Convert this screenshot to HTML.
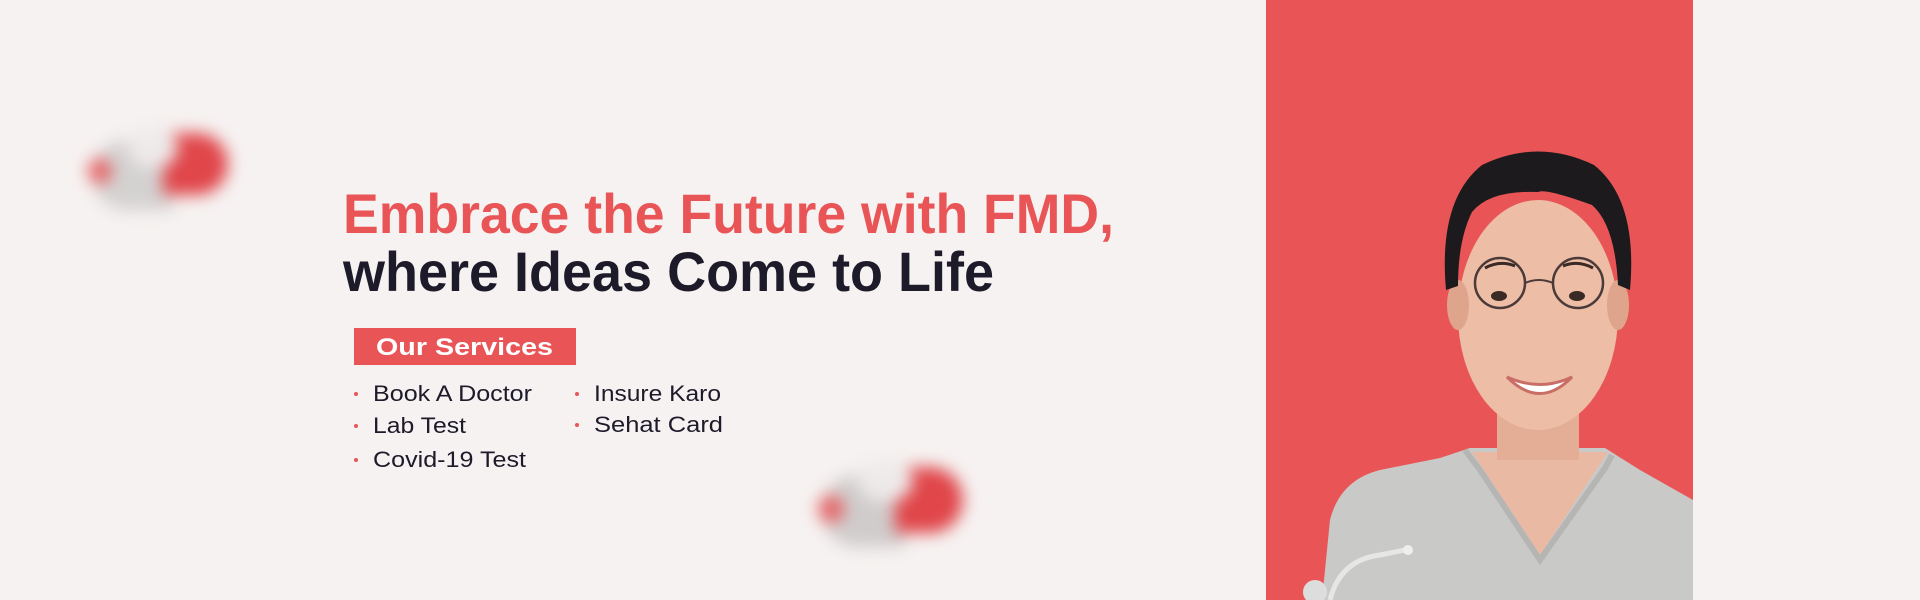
<!DOCTYPE html>
<html><head><meta charset="utf-8"><style>
html,body{margin:0;padding:0}
body{width:1920px;height:600px;overflow:hidden;background:#f6f2f1;position:relative;font-family:"Liberation Sans",sans-serif}
.panel{position:absolute;left:1266px;top:0;width:427px;height:600px;background:#e95556}
.pill{position:absolute;filter:blur(8px)}
</style></head><body>
<div class="panel"></div>

<div class="pill" style="left:88px;top:118px;width:140px;height:110px;">
 <div style="position:absolute;left:5px;top:22px;width:80px;height:70px;border-radius:34px 0 0 34px;background:#d4d1d1;"></div>
 <div style="position:absolute;left:75px;top:15px;width:65px;height:62px;border-radius:0 32px 32px 0;background:#e0464a;"></div>
 <div style="position:absolute;left:40px;top:10px;width:50px;height:40px;border-radius:50%;background:#eeeaea;"></div>
 <div style="position:absolute;left:0;top:40px;width:24px;height:26px;border-radius:50%;background:#e46466;"></div>
</div>
<div class="pill" style="left:818px;top:445px;width:145px;height:120px;">
 <div style="position:absolute;left:5px;top:30px;width:82px;height:72px;border-radius:34px 0 0 34px;background:#d0cccc;"></div>
 <div style="position:absolute;left:77px;top:22px;width:68px;height:66px;border-radius:0 34px 34px 0;background:#e0464a;"></div>
 <div style="position:absolute;left:40px;top:15px;width:55px;height:42px;border-radius:50%;background:#eeeaea;"></div>
 <div style="position:absolute;left:0;top:50px;width:26px;height:28px;border-radius:50%;background:#e46466;"></div>
</div>

<svg width="1920" height="600" style="position:absolute;left:0;top:0">
 <text x="343" y="233" font-family="Liberation Sans" font-weight="bold" font-size="56" fill="#e95556" textLength="771" lengthAdjust="spacingAndGlyphs">Embrace the Future with FMD,</text>
 <text x="343" y="291" font-family="Liberation Sans" font-weight="bold" font-size="56" fill="#1d1a2a" textLength="651" lengthAdjust="spacingAndGlyphs">where Ideas Come to Life</text>
 <rect x="354" y="328" width="222" height="37" fill="#e95556"/>
 <text x="376" y="355" font-family="Liberation Sans" font-weight="bold" font-size="24" fill="#fff" textLength="177" lengthAdjust="spacingAndGlyphs">Our  Services</text>
 <g font-family="Liberation Sans" font-size="22" fill="#1d1a2a">
  <text x="373" y="401" textLength="159" lengthAdjust="spacingAndGlyphs">Book A Doctor</text>
  <text x="373" y="433" textLength="93" lengthAdjust="spacingAndGlyphs">Lab Test</text>
  <text x="373" y="467" textLength="153" lengthAdjust="spacingAndGlyphs">Covid-19 Test</text>
  <text x="594" y="401" textLength="127" lengthAdjust="spacingAndGlyphs">Insure Karo</text>
  <text x="594" y="432" textLength="129" lengthAdjust="spacingAndGlyphs">Sehat Card</text>
 </g>
 <g fill="#e95556">
  <circle cx="356" cy="394" r="2"/><circle cx="356" cy="426" r="2"/><circle cx="356" cy="460" r="2"/>
  <circle cx="577" cy="394" r="2"/><circle cx="577" cy="425" r="2"/>
 </g>

 <!-- person -->
 <path d="M1322 600 L1330 520 Q1340 480 1380 470 L1440 458 L1470 448 L1605 448 L1640 470 L1693 500 L1693 600 Z" fill="#c9c9c7"/>
 <path d="M1472 452 L1540 555 L1608 452 Z" fill="#e9b9a3"/>
 <path d="M1465 450 L1480 470 L1540 560 L1605 468 L1612 455" fill="none" stroke="#b5b5b3" stroke-width="6"/>
 <rect x="1497" y="385" width="82" height="75" fill="#e3ad96"/>
 <ellipse cx="1538" cy="315" rx="80" ry="115" fill="#edbda5"/>
 <ellipse cx="1458" cy="305" rx="11" ry="25" fill="#dfa58c"/>
 <ellipse cx="1618" cy="305" rx="11" ry="25" fill="#dfa58c"/>
 <path d="M1446 290 Q1438 200 1482 165 Q1538 138 1594 165 Q1638 200 1630 290 L1618 285 Q1615 225 1592 205 Q1545 188 1538 192 Q1490 190 1472 212 Q1458 240 1458 286 Z" fill="#1c1a1c"/>
 <circle cx="1500" cy="283" r="25" fill="none" stroke="#4a3a3a" stroke-width="2.5"/>
 <circle cx="1578" cy="283" r="25" fill="none" stroke="#4a3a3a" stroke-width="2.5"/>
 <path d="M1525 283 Q1539 277 1553 283" fill="none" stroke="#4a3a3a" stroke-width="2"/>
 <path d="M1485 268 Q1500 260 1515 266 M1563 266 Q1578 260 1593 268" fill="none" stroke="#3a2a26" stroke-width="3"/>
 <ellipse cx="1499" cy="296" rx="8" ry="5" fill="#3a2a26"/>
 <ellipse cx="1577" cy="296" rx="8" ry="5" fill="#3a2a26"/>
 <path d="M1507 377 Q1540 392 1572 377 Q1540 410 1507 377 Z" fill="#fff" stroke="#c96e66" stroke-width="3"/>
 <path d="M1330 600 Q1340 560 1380 555 L1405 550" fill="none" stroke="#e6e6e6" stroke-width="5"/>
 <circle cx="1408" cy="550" r="5" fill="#eee"/>
 <circle cx="1315" cy="592" r="12" fill="#ddd"/>
</svg>
</body></html>
